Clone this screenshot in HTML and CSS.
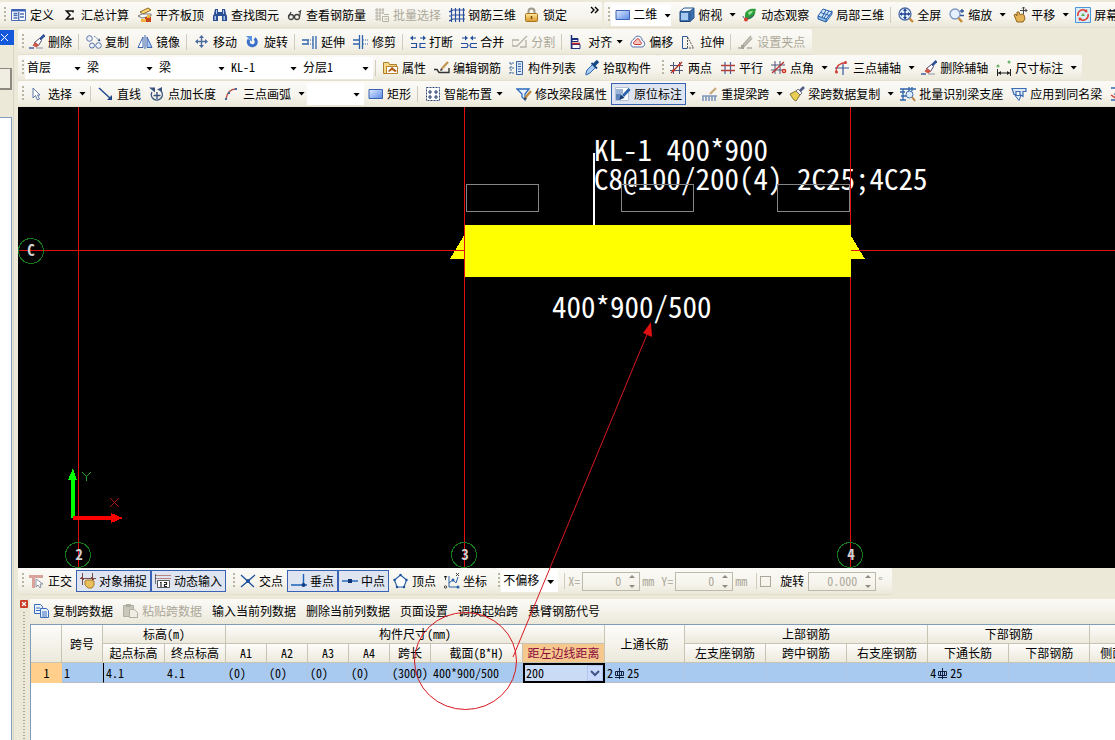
FILE: index.html
```html
<!DOCTYPE html>
<html lang="zh-CN">
<head>
<meta charset="utf-8">
<title>梁原位标注</title>
<link rel="stylesheet" href="styles.css">
</head>
<body>
<svg class="sprite" aria-hidden="true">
<defs>
<linearGradient id="gb" x1="0" y1="0" x2="1" y2="1"><stop offset="0" stop-color="#dfeaff"/><stop offset="1" stop-color="#5b8be6"/></linearGradient>
<linearGradient id="gy" x1="0" y1="0" x2="0" y2="1"><stop offset="0" stop-color="#ffe9a0"/><stop offset="1" stop-color="#d9962a"/></linearGradient>
</defs>
<symbol id="define" viewBox="0 0 16 16"><path fill="#fff" stroke="#4a6fb5" d="M.5 2.500h14v11H.5z"/><path fill="#3a63b8" d="M1 2h13v2.500H1z"/><path stroke="#4a6fb5" stroke-width="1.300" d="M2.500 6.500h4M2.500 8.500h4M2.500 11h4M9 7h4M9 10h4M7.700 5v8"/></symbol>
<symbol id="sum" viewBox="0 0 16 16"><path fill="none" stroke="#111" stroke-width="1.600" d="M11 5.500V4H4.500L8 8l-3.500 4H11v-1.500"/></symbol>
<symbol id="slab" viewBox="0 0 16 16"><path fill="#ffd873" stroke="#8a6420" d="M3 5l8-4 3 2-8 4z"/><path fill="#fff" stroke="#777" d="M1 9l4-2 9 0v2l-9 2z"/><path fill="#c8451c" d="M8 10h6v5H8z"/><path fill="#f5b53d" d="M4 12h5v3H4zM10 8h3v3h-3z"/></symbol>
<symbol id="find" viewBox="0 0 16 16"><path fill="#2c4f94" d="M3 2h3v3h4V2h3l1 5 1 2v5h-5V9H6v5H1V9l1-2z"/><path fill="#a9c5f2" d="M2.500 9h1.500v4H2.500zM11.500 9H13v4h-1.500zM4 3h1v4H4zM11 3h1v4h-1z"/></symbol>
<symbol id="glasses" viewBox="0 0 16 16"><g fill="none" stroke="#444" stroke-width="1.300"><circle cx="4" cy="10" r="2.500"/><circle cx="10" cy="10" r="2.500"/><path d="M6 9.500h1.500M1.500 10L4 5M12.500 10l1-6-2 1"/></g></symbol>
<symbol id="batch" viewBox="0 0 16 16"><g fill="none" stroke="#b5b2a6"><path d="M1 3h9M1 6h9M1 9h6M3 1v13M6 1v13M9 1v6M1 12h6M8.500 9.500h6v5h-6zM10 7.500h5M10.500 12h3"/></g></symbol>
<symbol id="rebar3d" viewBox="0 0 16 16"><g fill="none" stroke="#294f9e" stroke-width="1.200"><path d="M2.500 1v14M6.500 1v14M10.500 1v14M14.500 1v14M0 5l4-2h12M0 9l4-1h12M0 14l4-2h12"/></g></symbol>
<symbol id="lock" viewBox="0 0 16 16"><path fill="none" stroke="#a09a8c" stroke-width="2" d="M4.500 7V4.500a3 3 0 0 1 6 0V7"/><rect x="1.500" y="6.500" width="12" height="8" rx="1" fill="url(#gy)" stroke="#a9751b"/><path stroke="#7b4b07" stroke-width="1.500" d="M7.500 9v3"/></symbol>
<symbol id="rect" viewBox="0 0 16 16"><path fill="url(#gb)" stroke="#3c62b4" d="M1 3.500h13.500v9H1z"/></symbol>
<symbol id="cube" viewBox="0 0 16 16"><path fill="#3e6fae" stroke="#1f4578" d="M1 4.500h10v10H1z"/><path fill="#f4f9ff" stroke="#2b5a91" d="M1 4.500L5 1h10l-4 3.500z"/><path fill="#3e6fae" stroke="#2b5a91" d="M11 4.500L15 1v10l-4 3.500z"/><path fill="#a4c8ee" d="M2 6h7v7H2z"/></symbol>
<symbol id="orbit" viewBox="0 0 16 16"><path fill="#2f9e3c" d="M3 7c1-4 6-6 11-5-1 2 0 5-3 8s-6 3-8 1z"/><path fill="#9be09a" d="M6 6c1-2 3-2 5-2-1 2-2 3-4 4z"/><path fill="none" stroke="#39507c" d="M1 9c0 4 7 3 11-1"/><circle cx="4" cy="12.500" r="2" fill="#d63c29"/></symbol>
<symbol id="local3d" viewBox="0 0 16 16"><path fill="#8fbbe8" stroke="#265ea8" d="M1 9v3l8 3 6-8V4z"/><path fill="#d3e7fa" stroke="#265ea8" d="M1 9l5-7 9 3-6 7z"/><path fill="none" stroke="#265ea8" d="M3.500 5.500l9 3M9 3l-4 7.500M12 4l-5 7M9 12v3"/></symbol>
<symbol id="full" viewBox="0 0 16 16"><circle cx="7" cy="7" r="6" fill="#e6f1ff" stroke="#4a6da8" stroke-width="1.300"/><path stroke="#1e3f91" stroke-width="1.300" d="M7 2.500v9M2.500 7h9"/><path fill="#1e3f91" d="M7 1.500L5 4h4zM7 12.500L5 10h4zM1.500 7L4 5v4zM12.500 7L10 5v4z"/><path stroke="#c58a3a" stroke-width="2.400" d="M11.500 11.500L15 15"/></symbol>
<symbol id="zoom" viewBox="0 0 16 16"><circle cx="6" cy="7" r="5" fill="#e6f1ff" stroke="#7c96c0" stroke-width="1.300"/><path stroke="#c58a3a" stroke-width="2.400" d="M9.500 11L13 15"/><path stroke="#31569c" stroke-width="1.300" d="M11 4h4M13 2v4M11 8.500h4"/></symbol>
<symbol id="pan" viewBox="0 0 16 16"><path fill="#e7b455" stroke="#8d6520" d="M2 8l2-1 1 2 0-4 2 0 1 3 2-1 2 1 1 4-2 3H5z"/><path fill="none" stroke="#444" d="M11.500 0v7M8 3.500h7M10 1.500L11.500 0 13 1.500M13.500 2L15 3.500 13.500 5"/></symbol>
<symbol id="screen" viewBox="0 0 16 16"><path fill="#d7edf9" stroke="#4d95d7" d="M.5.5h15v15H.5z"/><path fill="none" stroke="#df3d31" stroke-width="1.600" d="M3 9a5 5 0 0 1 8-5M13 7a5 5 0 0 1-8 5"/><path fill="#df3d31" d="M12.500 5.500L9 5l3-3zM3.500 10.500l3.500.5-3 3z"/><path fill="#5eac54" d="M6 9l2-3 2 3z"/></symbol>
<symbol id="erase" viewBox="0 0 16 16"><path stroke="#2c4f9a" stroke-width="2.600" d="M15.500 1l-5 5"/><path fill="#fff" stroke="#4b4b74" d="M10.500 4.500l2 2-3 5-4-3z"/><path fill="#c9574a" d="M6 8l4 3-2.500 2.500-4-2z"/><path stroke="#5368a6" stroke-width="1.600" d="M0 14h5"/><path stroke="#8d92ab" d="M7 14h7"/></symbol>
<symbol id="copy" viewBox="0 0 16 16"><g fill="#eef3fb" stroke="#5874ab"><circle cx="3.500" cy="4.500" r="2.800"/><circle cx="6" cy="11.500" r="2.500"/><circle cx="12.500" cy="11.500" r="2.800"/></g><path fill="none" stroke="#6278a5" stroke-dasharray="2 1" d="M8 2l5 4"/><path fill="#3c5997" d="M14.500 7.500l-3-1 2-2z"/></symbol>
<symbol id="mirror" viewBox="0 0 16 16"><path fill="#fff" stroke="#3b64b1" d="M6 3v10.500H1z"/><path fill="#a8c8f4" stroke="#3b64b1" d="M10 3v10.500h5z"/><path stroke="#3b64b1" d="M8 1v14"/></symbol>
<symbol id="move" viewBox="0 0 16 16"><path stroke="#4f6c9f" stroke-width="1.400" d="M7.500 2v11M2 7.500h11"/><path fill="#4f6c9f" d="M7.500 1L5 4h5zM7.500 14L5 11h5zM1 7.500L4 5v5zM14 7.500L11 5v5z"/></symbol>
<symbol id="rotate" viewBox="0 0 16 16"><path fill="none" stroke="#3a70cc" stroke-width="3" d="M9.500 4.500a4 4 0 1 1-5.500 1"/><path fill="#5b93e4" d="M1 2h6v6z"/></symbol>
<symbol id="extend" viewBox="0 0 16 16"><path fill="none" stroke="#3166ae" stroke-width="1.300" d="M0 6h6v4H0M11 2v13M14 2v13"/><path stroke="#3166ae" stroke-dasharray="1 1" d="M6 6h5M6 10h5"/></symbol>
<symbol id="trim" viewBox="0 0 16 16"><path fill="none" stroke="#3166ae" stroke-width="1.300" d="M0 6h6M0 10h6M6.500 1v14M9.500 1v14"/><path stroke="#3166ae" stroke-dasharray="1 1" d="M10 6h6M10 10h6"/></symbol>
<symbol id="break" viewBox="0 0 16 16"><path fill="none" stroke="#234e9f" stroke-width="1.200" d="M1 9.500h5.500v4H1M15.500 9.500H10v4h5.500M2 4h4M10 4h4"/><path fill="#234e9f" d="M0 4l3-2.500v5zM16 4l-3-2.500v5z"/></symbol>
<symbol id="merge" viewBox="0 0 16 16"><path fill="none" stroke="#234e9f" stroke-width="1.200" d="M0 9.500h6l1 2-1 2H0M16 9.500h-6l-1 2 1 2h6M1 4h4M11 4h4"/><path fill="#234e9f" d="M7 4L4 1.500v5zM9 4l3-2.500v5z"/></symbol>
<symbol id="split" viewBox="0 0 16 16"><path fill="none" stroke="#b5b2a6" stroke-width="1.300" d="M0 6h7M0 12h5l10-10M8 13h6V6M0 6v6"/></symbol>
<symbol id="align" viewBox="0 0 16 16"><path stroke="#1d2f7c" stroke-width="1.500" d="M2.500 1v14"/><path fill="#fff" stroke="#1d2f7c" d="M3 4.500h6v3H3zM3 10.500h8v4H3z"/><path stroke="#c62b2b" stroke-width="1.600" d="M3 9.500h8"/><path fill="#1d2f7c" d="M3 4h6v2H3z"/></symbol>
<symbol id="offset" viewBox="0 0 16 16"><path fill="#f3f7ff" stroke="#5574a8" d="M4 5C5 1 12 1 12 6c4 2 3 7 0 7H3C0 13 0 7 4 5z"/><path fill="#f5c4bd" stroke="#ce3a30" d="M5.500 7C6 4 10 4 10 7.500c2 1 2 3 0 3H5c-2 0-2-3 .5-3.500z"/></symbol>
<symbol id="stretch" viewBox="0 0 16 16"><path fill="none" stroke="#2f589d" d="M6.500 2.500h-5v12h5"/><path fill="none" stroke="#555" stroke-dasharray="2 1" d="M6.500 3v11M6.500 3l6 11H7"/></symbol>
<symbol id="grip" viewBox="0 0 16 16"><path fill="none" stroke="#b0ada2" stroke-width="1.700" d="M5 11l8-9M4 12l2 .5L14 4M0 14h3M9 14h5"/><path fill="#a5a297" d="M3 11h3v4H3z"/></symbol>
<symbol id="prop" viewBox="0 0 16 16"><path fill="#f7d98b" stroke="#ad7e2c" d="M.5 2.500h5l1 2h7v9H.500z"/><path fill="#fff" stroke="#b9822c" d="M3.500 6.500h11v7h-11z"/><path fill="#b05d1b" d="M5 11l4-4 5 4-2 1-3-2-3 2z"/></symbol>
<symbol id="editbar" viewBox="0 0 16 16"><path fill="none" stroke="#333" stroke-width="1.400" d="M0 9.500h3l2 3h10V8"/><path stroke="#c29656" stroke-width="2.200" d="M14 2L8 8.500"/><path fill="#333" d="M6 11l1-3 2 2z"/></symbol>
<symbol id="list" viewBox="0 0 16 16"><path fill="#dce9fc" stroke="#38649f" d="M7.500 1.500h6v13h-6z"/><path stroke="#38649f" d="M9 4h3M9 6.500h3M9 9h3M9 11.500h3"/><path stroke="#38649f" stroke-dasharray="2 1" d="M0 3h6M0 8h6M0 13h6M2 3v10"/></symbol>
<symbol id="pick" viewBox="0 0 16 16"><path fill="#a7cbf2" stroke="#2b65af" d="M2 13l1-3 6-6 3 3-6 6-4 2z"/><path stroke="#174884" stroke-width="3.400" d="M10 5l4-4"/><path stroke="#174884" stroke-width="1.800" d="M7.500 3l5.500 5.500"/></symbol>
<symbol id="twopt" viewBox="0 0 16 16"><path stroke="#4c5579" d="M4.500 2v12M10.500 2v12M1 5.500h13M1 10.500h13"/><path stroke="#a73426" stroke-width="1.200" d="M2 13L13 2"/><circle cx="4.500" cy="10.500" r="1.300" fill="#d53426"/><circle cx="10.500" cy="5" r="1.300" fill="#d53426"/></symbol>
<symbol id="parallel" viewBox="0 0 16 16"><path stroke="#3b5fa0" stroke-width="1.200" d="M5 2v12M10.500 2v12"/><path stroke="#b64039" stroke-width="1.300" d="M1 5.500h14M1 10.500h14"/></symbol>
<symbol id="angle" viewBox="0 0 16 16"><path stroke="#4c5579" d="M4 1v13M9 1v13M0 5h14M0 10h12"/><path stroke="#c02c29" stroke-width="1.200" d="M1 13L13 2"/><circle cx="13" cy="11" r="1.600" fill="none" stroke="#d53426" stroke-width="1.500"/></symbol>
<symbol id="arcaxis" viewBox="0 0 16 16"><path stroke="#36589b" stroke-width="1.200" d="M9 3v12M1 8h14"/><path fill="none" stroke="#d13e34" stroke-width="1.300" d="M2 12C2 6 6 3 12 2.500"/><circle cx="2.500" cy="12" r="1.500" fill="#d13e34"/><circle cx="11.500" cy="2.500" r="1.500" fill="#d13e34"/></symbol>
<symbol id="dim" viewBox="0 0 16 16"><path stroke="#222" d="M1.500 9v7M14.500 9v7M2 13h12"/><path fill="#222" d="M2 13l3-2v4zM14 13l-3-2v4z"/><circle cx="2" cy="6" r="1.500" fill="#6db36a"/><circle cx="13" cy="2" r="1.500" fill="#6db36a"/></symbol>
<symbol id="cursor" viewBox="0 0 16 16"><path fill="#fff" stroke="#6079aa" d="M4 2v10l2.500-2.500L8.500 14l2-1-2-4H11z"/></symbol>
<symbol id="line" viewBox="0 0 16 16"><path stroke="#20478c" stroke-width="1.400" d="M1 2l12 11"/><path fill="#20478c" d="M14 14H9l5-5z"/></symbol>
<symbol id="ptlen" viewBox="0 0 16 16"><path fill="none" stroke="#38547f" stroke-width="1.400" d="M3 6a5.500 5.500 0 1 0 9-1M8 6v7M4.500 9.500h7"/><path fill="#38547f" d="M0 1.500h6v5zM8 3.500l5-2.500v5z"/></symbol>
<symbol id="arc" viewBox="0 0 16 16"><path fill="none" stroke="#b84a42" stroke-width="1.300" d="M2 13C3 7 6 3 12 3"/><path fill="#43659f" d="M1 12h2v2H1zM11 2h2v2h-2zM4 6h2v2H4z"/></symbol>
<symbol id="smart" viewBox="0 0 16 16"><path fill="#fff" stroke="#2d4679" stroke-dasharray="2 1" d="M1.500 1.500h13v13h-13z"/><path stroke="#2d4679" stroke-width="1.200" d="M3 6h4M5 4v4M9 6h4M11 4v4M3 11h4M5 9v4M9 11h4M11 9v4"/></symbol>
<symbol id="modseg" viewBox="0 0 16 16"><path fill="#eaf4ff" stroke="#2d6bbd" stroke-width="1.300" d="M1 3h12l-4 5v6l-3-3V8z"/><path stroke="#ba8d42" stroke-width="2.400" d="M15 5l-6 7"/><path fill="#333" d="M8 14l1-3 2 2z"/></symbol>
<symbol id="insitu" viewBox="0 0 16 16"><path fill="#fff" stroke="#b4c2da" d="M.5 1.500h13v13H.5z"/><path fill="#9db4d6" d="M1 3h7v5H1z"/><path fill="#5f84bb" d="M1 8h5v6H1z"/><path stroke="#2a63ab" stroke-width="2.800" d="M14.500 3L8 10"/><path fill="#103875" d="M4.500 13.500l1.500-5 3.500 3.500z"/></symbol>
<symbol id="respan" viewBox="0 0 16 16"><path fill="none" stroke="#7f97bb" stroke-width="1.600" d="M1 15v-5h3v5M7 15v-5h3v5M13 15v-5h2M1 10h13"/><path stroke="#c9a878" stroke-width="2.200" d="M14 2L8 8"/></symbol>
<symbol id="brush" viewBox="0 0 16 16"><path fill="#e8ce53" stroke="#8a7425" d="M1 8l6-3 4 4-4 6c-3-1-4-4-6-7z"/><path fill="#f4f4f7" stroke="#74747c" d="M7 5l2-2 4 4-2 2z"/><path stroke="#4f5e88" stroke-width="2.600" d="M11 5l4-4"/></symbol>
<symbol id="support" viewBox="0 0 16 16"><path fill="none" stroke="#2f66ad" stroke-width="1.300" d="M0 3h16M0 6h5M3 3v11M0 14h6M9 1v4M12 1v4M1 10h5"/><circle cx="9.500" cy="8.500" r="3.500" fill="#dcecff" stroke="#3b68a5"/><path stroke="#b98342" stroke-width="2" d="M12 11l3 4"/></symbol>
<symbol id="apply" viewBox="0 0 16 16"><path fill="#dbe8fa" stroke="#3d6db1" stroke-width="1.200" d="M1 2.500h14v3h-3v5l-3-2V5.500H5v3H3z"/><path fill="#dbe8fa" stroke="#3d6db1" d="M4 9.500h6l-2 5z"/></symbol>
<symbol id="more" viewBox="0 0 16 16"><path fill="#fff" stroke="#2f66ad" stroke-width="1.300" d="M1 2h10L5 8h10M1 14h12"/><path stroke="#d13e34" stroke-width="1.500" d="M1 9l6 4"/></symbol>
<symbol id="ortho" viewBox="0 0 16 16"><path fill="none" stroke="#d9a29b" stroke-width="3" d="M0 3.500h14M4.500 3v12"/><path fill="#fff" stroke="#8b92a5" d="M7 6v8l2-2 2 3 1-1-1-3h3z"/></symbol>
<symbol id="snap" viewBox="0 0 16 16"><path stroke="#714f4f" d="M0 5.500h16M2.500 0v12M12.500 0v8"/><path fill="#eac05e" stroke="#a87a27" d="M5 8l2-1h4l3 1v4l-2 3H8l-3-3z"/><path stroke="#a73426" d="M1 4l3 3M11 4l3 3"/></symbol>
<symbol id="dyn" viewBox="0 0 16 16"><path stroke="#b78683" stroke-width="1.200" d="M0 2.500h16M0 5.500h16"/><path fill="#fff" stroke="#555" d="M2.500 7.500h12v7h-12z"/><path fill="none" stroke="#222" stroke-width="1.200" d="M6 9v5M5 9.500h1M9 9.500h2.500v2H9.500v2H12M0 1v10"/></symbol>
<symbol id="cross" viewBox="0 0 16 16"><path stroke="#1c4f9c" stroke-width="1.300" d="M1 2l13 12M15 2L1 14"/><circle cx="8" cy="8" r="2" fill="#1c4f9c"/></symbol>
<symbol id="perp" viewBox="0 0 16 16"><path stroke="#1c62b8" stroke-width="1.400" d="M0 12h16M12.500 1v11"/><circle cx="12.500" cy="12" r="2" fill="#123f82"/></symbol>
<symbol id="mid" viewBox="0 0 16 16"><path stroke="#1c62b8" stroke-width="1.400" d="M0 8h16"/><path fill="#0e3475" d="M6 6h4v4H6z"/></symbol>
<symbol id="vertex" viewBox="0 0 16 16"><path fill="#fff" stroke="#2a62a9" stroke-width="1.200" d="M7.500 2l6 5-2.500 7H4L1.500 7z"/><g fill="#1c4f9c"><circle cx="7.500" cy="2" r="1.200"/><circle cx="13.500" cy="7" r="1.200"/><circle cx="11" cy="14" r="1.200"/><circle cx="4" cy="14" r="1.200"/><circle cx="1.500" cy="7" r="1.200"/></g></symbol>
<symbol id="coord" viewBox="0 0 16 16"><path fill="none" stroke="#2a62a9" d="M5 3v11h10M5 10l4-3 3 3 2-6"/><path stroke="#444" d="M0 3l1.500 2L3 3M1.500 5v2M12 0l3 3M15 0l-3 3"/><circle cx="1.500" cy="14" r="1.200" fill="none" stroke="#444"/><circle cx="9" cy="7" r="1.500" fill="#2a62a9"/><circle cx="14" cy="14" r="1.500" fill="#2a62a9"/></symbol>
<symbol id="docs" viewBox="0 0 16 16"><path fill="#eaf2ff" stroke="#3b6cba" d="M.5 1.500h6l2 2v7h-8z"/><path fill="#eaf2ff" stroke="#3b6cba" d="M6.500 5.500h6l2 2v7h-8z"/><path stroke="#3b6cba" d="M2 5h4M2 7.500h4M8 9h5M8 11h5M8 13h5"/></symbol>
<symbol id="paste" viewBox="0 0 16 16"><path fill="#c9c6ba" stroke="#b0ada2" d="M.5 2.500h10v11H.5z"/><path fill="#b0ada2" d="M3 1h5v3H3z"/><path fill="#efede4" stroke="#b0ada2" d="M6.500 6.500h5l3 3v5h-8z"/></symbol>
<symbol id="bar" viewBox="0 0 12 12"><path fill="none" stroke="#102040" d="M5.500 0v11M1.500 3.500h8v4h-8zM1 9.500h9M3.500 3v4M7.500 3v4"/></symbol>
</svg>

<header class="row">
<div class="band start">
<button><svg><use href="#define"/></svg>定义</button><button><svg><use href="#sum"/></svg>汇总计算</button><button><svg><use href="#slab"/></svg>平齐板顶</button><button><svg><use href="#find"/></svg>查找图元</button><button><svg><use href="#glasses"/></svg>查看钢筋量</button><button disabled><svg><use href="#batch"/></svg>批量选择</button><button><svg><use href="#rebar3d"/></svg>钢筋三维</button><button><svg><use href="#lock"/></svg>锁定</button><button class="chevrons" aria-label="更多"><svg viewBox="0 0 16 16"><path fill="none" stroke="#000" stroke-width="1.400" d="M8 3l3 3-3 3M12 3l3 3-3 3"/></svg></button>
</div>
<div class="band grow">
<label class="combo view"><svg><use href="#rect"/></svg><select aria-label="视图"><option>二维</option></select></label>
<button><svg><use href="#cube"/></svg>俯视</button><button class="drop" aria-label="俯视选项"></button><button><svg><use href="#orbit"/></svg>动态观察</button><button><svg><use href="#local3d"/></svg>局部三维</button><i class="sep"></i><button><svg><use href="#full"/></svg>全屏</button><button><svg><use href="#zoom"/></svg>缩放</button><button class="drop" aria-label="缩放选项"></button><button><svg><use href="#pan"/></svg>平移</button><button class="drop" aria-label="平移选项"></button><button><svg><use href="#screen"/></svg>屏幕</button>
</div>
</header>

<div class="work">
<aside class="dock"><button class="dockclose" aria-label="关闭"><svg viewBox="0 0 14 15"><path stroke="#fff" d="M1 4l7 7M8 4l-7 7"/></svg></button><div class="docktab"></div><div class="docklist"></div></aside>
<main>
<div class="row">
<div class="band">
<button><svg><use href="#erase"/></svg>删除</button><i class="sep"></i><button><svg><use href="#copy"/></svg>复制</button><button><svg><use href="#mirror"/></svg>镜像</button><i class="sep"></i><button><svg><use href="#move"/></svg>移动</button><button><svg><use href="#rotate"/></svg>旋转</button><i class="sep"></i><button><svg><use href="#extend"/></svg>延伸</button><button><svg><use href="#trim"/></svg>修剪</button><i class="sep"></i><button><svg><use href="#break"/></svg>打断</button><button><svg><use href="#merge"/></svg>合并</button><button disabled><svg><use href="#split"/></svg>分割</button><i class="sep"></i><button><svg><use href="#align"/></svg>对齐</button><button class="drop tight" aria-label="对齐选项"></button><button><svg><use href="#offset"/></svg>偏移</button><button><svg><use href="#stretch"/></svg>拉伸</button><i class="sep"></i><button disabled><svg><use href="#grip"/></svg>设置夹点</button>
</div>
</div>
<div class="row">
<div class="band">
<label class="combo floor"><select aria-label="楼层"><option>首层</option></select></label><label class="combo"><select aria-label="构件类别"><option>梁</option></select></label><label class="combo"><select aria-label="构件类型"><option>梁</option></select></label><label class="combo"><select aria-label="构件"><option>KL-1</option></select></label><label class="combo"><select aria-label="分层"><option>分层1</option></select></label><i class="sep"></i><button><svg><use href="#prop"/></svg>属性</button><button><svg><use href="#editbar"/></svg>编辑钢筋</button><button><svg><use href="#list"/></svg>构件列表</button><button><svg><use href="#pick"/></svg>拾取构件</button>
</div>
<div class="band">
<button><svg><use href="#twopt"/></svg>两点</button><button><svg><use href="#parallel"/></svg>平行</button><button><svg><use href="#angle"/></svg>点角</button><button class="drop" aria-label="点角选项"></button><button><svg><use href="#arcaxis"/></svg>三点辅轴</button><button class="drop" aria-label="辅轴选项"></button><button><svg><use href="#erase"/></svg>删除辅轴</button><button><svg><use href="#dim"/></svg>尺寸标注</button><button class="drop" aria-label="标注选项"></button>
</div>
</div>
<div class="row">
<div class="band grow">
<button><svg><use href="#cursor"/></svg>选择</button><button class="drop" aria-label="选择选项"></button><i class="sep"></i><button><svg><use href="#line"/></svg>直线</button><button><svg><use href="#ptlen"/></svg>点加长度</button><button><svg><use href="#arc"/></svg>三点画弧</button><button class="drop" aria-label="画弧选项"></button><label class="combo short"><select aria-label="画弧参数"><option></option></select></label><button><svg><use href="#rect"/></svg>矩形</button><i class="sep"></i><button><svg><use href="#smart"/></svg>智能布置</button><button class="drop tight" aria-label="布置选项"></button><button class="lead"><svg><use href="#modseg"/></svg>修改梁段属性</button><button class="on"><svg><use href="#insitu"/></svg>原位标注</button><button class="drop" aria-label="原位标注选项"></button><button><svg><use href="#respan"/></svg>重提梁跨</button><button class="drop" aria-label="梁跨选项"></button><button><svg><use href="#brush"/></svg>梁跨数据复制</button><button class="drop" aria-label="复制选项"></button><button><svg><use href="#support"/></svg>批量识别梁支座</button><button><svg><use href="#apply"/></svg>应用到同名梁</button><button aria-label="更多"><svg><use href="#more"/></svg></button>
</div>
</div>

<svg class="canvas" role="img" aria-label="梁平面图">
<g transform="translate(-18 -107)" shape-rendering="crispEdges">
<g class="note"><text x="594" y="161">KL-1 400*900</text><text x="594" y="190">C8@100/200(4) 2C25;4C25</text><text x="552" y="318">400*900/500</text></g>
<path stroke="#fff" stroke-width="2" d="M594 153v72"/>
<path fill="#ff0" d="M465 234v25h-15zM850 234v25h15z"/>
<path stroke="#e01010" d="M18 250.500h447M850 250.500h3000M78.500 107v461"/>
<path fill="#ff0" d="M465 225h386v52H465z"/>
<path stroke="#e01010" d="M464.500 107v461M850.500 107v118M850.500 277v291"/>
<path fill="none" stroke="#858585" d="M466.500 184.500h72v27h-72zM621.500 184.500h72v27h-72zM777.500 184.500h72v27h-72z"/>
<g class="axis"><circle cx="31" cy="251" r="12.500"/><circle cx="78" cy="555" r="12.500"/><circle cx="464" cy="555" r="12.500"/><circle cx="850" cy="555" r="12.500"/></g>
<g class="mark"><text x="31" y="256">C</text><text x="79" y="560">2</text><text x="465" y="560">3</text><text x="851" y="560">4</text></g>
<path fill="#0f0" d="M71 518v-38h-3l5-12 4 12h-2v38z"/>
<path fill="red" d="M73 516h38v-3l12 5-12 5v-3H73z"/>
<path fill="none" stroke="#25a52d" d="M82 472l4.500 4.500 4.500-4.500M86.500 476v5"/>
<path fill="none" stroke="#b01818" d="M110 498l9 9M119 498l-9 9"/>
</g>
</svg>

<div class="row snap">
<div class="band">
<button><svg><use href="#ortho"/></svg>正交</button><button class="on"><svg><use href="#snap"/></svg>对象捕捉</button><button class="on"><svg><use href="#dyn"/></svg>动态输入</button>
</div>
<div class="band">
<button><svg><use href="#cross"/></svg>交点</button><button class="on"><svg><use href="#perp"/></svg>垂点</button><button class="on"><svg><use href="#mid"/></svg>中点</button><button><svg><use href="#vertex"/></svg>顶点</button><button><svg><use href="#coord"/></svg>坐标</button>
</div>
<div class="band">
<label class="combo short"><select aria-label="偏移方式"><option>不偏移</option></select></label><i class="sep"></i>
<label class="field">X=<span class="spin"><input value="0" disabled></span>mm</label>
<label class="field">Y=<span class="spin"><input value="0" disabled></span>mm</label>
<i class="sep"></i>
<label class="field check"><input type="checkbox">旋转</label>
<label class="field"><span class="spin wide"><input value="0.000" aria-label="旋转角度" disabled></span>°</label>
</div>
</div>

<section class="panel">
<div class="panelgrip"><button aria-label="关闭面板"><svg viewBox="0 0 8 8"><path stroke="#fff" stroke-width="1.200" d="M2 2l4 4M6 2L2 6"/></svg></button></div>
<div class="panelbody">
<div class="tools"><button><svg><use href="#docs"/></svg>复制跨数据</button><button disabled><svg><use href="#paste"/></svg>粘贴跨数据</button><button>输入当前列数据</button><button>删除当前列数据</button><button>页面设置</button><button>调换起始跨</button><button>悬臂钢筋代号</button></div>
<div class="grid">
<table>
<colgroup><col class="w31"><col class="w41"><col class="w62"><col class="w61"><col class="w41"><col class="w41"><col class="w41"><col class="w41"><col class="w41"><col class="w92"><col class="w82"><col class="w80"><col class="w81"><col class="w81"><col class="w81"><col class="w81"><col class="w81"><col class="w81"></colgroup>
<thead>
<tr><th rowspan="2"></th><th rowspan="2">跨号</th><th colspan="2">标高(m)</th><th colspan="7">构件尺寸(mm)</th><th rowspan="2">上通长筋</th><th colspan="3">上部钢筋</th><th colspan="2">下部钢筋</th><th></th></tr>
<tr><th>起点标高</th><th>终点标高</th><th>A1</th><th>A2</th><th>A3</th><th>A4</th><th>跨长</th><th>截面(B*H)</th><th class="hot">距左边线距离</th><th>左支座钢筋</th><th>跨中钢筋</th><th>右支座钢筋</th><th>下通长筋</th><th>下部钢筋</th><th>侧面通长筋</th></tr>
</thead>
<tbody>
<tr><th scope="row">1</th><td>1</td><td class="caret">4.1</td><td>4.1</td><td>(0)</td><td>(0)</td><td>(0)</td><td>(0)</td><td>(3000)</td><td>400*900/500</td><td class="edit"><label class="celledit"><select aria-label="距左边线距离"><option>200</option></select><svg viewBox="0 0 16 16"><path fill="#c9dafc" stroke="#b0c4ee" d="M.5.5h15v15H.5z"/><path fill="none" stroke="#3f5587" stroke-width="2" d="M4 6l4 4 4-4"/></svg></label></td><td>2<svg class="bar"><use href="#bar"/></svg>25</td><td></td><td></td><td></td><td>4<svg class="bar"><use href="#bar"/></svg>25</td><td></td><td></td></tr>
</tbody>
</table>
</div>
</div>
<svg class="callout" viewBox="0 0 250 400" aria-hidden="true"><path fill="none" stroke="#d81820" d="M149 353L284 28"/><path fill="#e01010" d="M287 18l1 15-9-4z"/><ellipse cx="101.500" cy="357" rx="51" ry="48.500" fill="none" stroke="#d81820"/></svg>
</section>
</main>
</div>
</body>
</html>
```
FILE: styles.css
```css
* { box-sizing: border-box; }
body {
  margin: 0;
  height: 100vh;
  display: flex;
  flex-direction: column;
  overflow: hidden;
  background: #ece9d8;
  color: #000;
  font: 12px/16px "Noto Sans CJK SC", sans-serif;
  font-feature-settings: "hwid";
}
.sprite { position: absolute; width: 0; height: 0; }
button, select, input { font: inherit; font-feature-settings: inherit; color: inherit; }
svg { flex: none; }

/* Toolbars */
.row { display: flex; height: 26px; flex: none; overflow: hidden; }
header.row { margin: 2px 0 1px; gap: 2px; }
.band {
  display: flex;
  align-items: center;
  flex: none;
  padding-right: 3px;
  border-bottom: 1px solid #e4e0cd;
  border-radius: 2px;
  background: linear-gradient(#fbfaf7, #f6f4ec 60%, #ebe8da);
}
.band::before {
  content: "";
  flex: none;
  width: 2px;
  height: 16px;
  margin: 0 1px 0 4px;
  background: repeating-linear-gradient(#bab6a4 0 2px, transparent 2px 4px);
}
.band.grow { flex: 1 0 auto; }
button {
  display: flex;
  align-items: center;
  flex: none;
  gap: 3px;
  height: 22px;
  padding: 0 4px;
  border: 0;
  background: none;
  white-space: nowrap;
}
button svg, .combo svg { width: 16px; height: 16px; }
button:disabled { color: #aca899; }
button.on { padding: 0 3px; border: 1px solid #3a62b4; background: #dfe5f0; }
button.lead { margin-left: 6px; }
button.drop { width: 12px; height: 22px; padding: 0 3px; }
button.drop::before, .combo::after {
  content: "";
  width: 7px;
  height: 4px;
  flex: none;
  background: #000;
  clip-path: polygon(0 0, 100% 0, 50% 100%);
}
button.tight { width: 10px; padding: 0; }
.chevrons { margin-left: 12px; padding: 0; align-items: flex-start; }
.sep { width: 1px; height: 16px; margin: 0 3px 0 2px; background: #cfccbe; flex: none; }
.combo { position: relative; display: flex; align-items: center; width: 72px; height: 22px; flex: none; background: #fff; }
.combo::after { position: absolute; right: 4px; top: 10px; }
.combo select {
  flex: 1;
  min-width: 0;
  height: 20px;
  padding: 0 14px 2px 2px;
  border: 0;
  outline: 0;
  appearance: none;
  background: none;
}
.combo.short { width: 57px; }
.combo.floor { width: 60px; }
.combo.view { width: 60px; margin-right: 4px; }
.combo.view svg { margin: 0 1px 0 4px; }
.combo.view select { padding-left: 1px; padding-right: 0; }
.combo.view::after { right: 0; }

/* Side dock */
.work { display: flex; flex: 1; min-height: 0; }
.dock { display: flex; flex-direction: column; width: 14px; margin-right: 4px; flex: none; border-right: 1px solid #d8d5c8; }
.dockclose { width: 14px; height: 15px; margin-top: 1px; padding: 0; background: #1458dc; }
.dockclose svg { width: 14px; height: 15px; }
.docktab { height: 22px; margin: 23px 1px 27px 0; border: solid #8c8a80; border-width: 1px 2px 2px 0; background: #f0eee2; }
.docklist { flex: 1; margin-right: 1px; border: solid #7f9db9; border-width: 1px 1px 0 0; background: #fff; }
main { flex: 1; min-width: 0; display: flex; flex-direction: column; }

/* Drawing */
.canvas { display: block; flex: 1; width: 100%; min-height: 0; background: #000; }
.note { fill: #fff; font-size: 29px; font-weight: 400; white-space: pre; }
.mark { fill: #d0d0d0; font-size: 15px; font-weight: 700; text-anchor: middle; }
.axis { fill: none; stroke: #167a1c; }

/* Snap bar */
.snap { height: 27px; }
.snap .band + .band + .band { padding-right: 9px; }
.snap .combo { margin-right: 4px; }
.field { display: flex; align-items: center; gap: 2px; margin-right: 7px; color: #aca899; }
.field:last-child { margin: 0; }
.spin { position: relative; display: block; width: 58px; height: 19px; border: 1px solid #bdbaab; }
.spin.wide { width: 68px; }
.spin input { width: 100%; height: 17px; padding: 0 18px 2px 0; border: 0; background: none; color: #aca899; text-align: right; display: block; }
.spin::before, .spin::after { content: ""; position: absolute; right: 4px; border: 3px solid transparent; }
.spin::before { top: 2px; border-top: 0; border-bottom-color: #8f8c80; }
.spin::after { bottom: 2px; border-bottom: 0; border-top-color: #8f8c80; }
.check { color: #000; gap: 9px; margin-right: 4px; }
.check input { appearance: none; width: 11px; height: 11px; margin: 0; border: 1px solid #aca899; }

/* Span data panel */
.panel { position: relative; display: flex; height: 145px; flex: none; padding-top: 4px; }
.panelgrip { width: 12px; flex: none; display: flex; flex-direction: column; gap: 4px; padding: 1px 0 0 2px; }
.panelgrip button { width: 8px; height: 8px; padding: 0; border-radius: 1px; background: #c93a24; }
.panelgrip button svg { width: 8px; height: 8px; }
.panelgrip::after { content: ""; flex: 1; width: 2px; margin-left: 3px; background: repeating-linear-gradient(#aaa797 0 1px, transparent 1px 3px); }
.panelbody { flex: 1; min-width: 0; display: flex; flex-direction: column; }
.tools { display: flex; align-items: center; height: 25px; flex: none; gap: 2px; padding-bottom: 2px; background: linear-gradient(#fcfbf8, #ebe8da); }
.grid { flex: 1; overflow: hidden; border: solid #7f9db9; border-width: 1px 0 0 1px; background: #fff; }
table { table-layout: fixed; width: 1140px; border-collapse: separate; border-spacing: 0; }
th, td { height: 19px; padding: 0 1px; overflow: hidden; white-space: nowrap; line-height: 18px; }
thead th { border: solid #c8c4b4; border-width: 0 1px 1px 0; background: linear-gradient(#fdfcfa, #ece9dc); font-weight: 400; }
thead th.hot { background: #f6c88e; color: #8a0a3c; }
tbody th { background: #ffcf8b; font-weight: 400; }
tbody td { padding-left: 2px; border-right: 1px solid #b0c6e2; border-bottom: 1px solid #b8bcc4; background: #a8caf0; }
tbody td.caret { border-left: 1px solid #000; }
tbody td.edit { padding: 0; border: 2px solid #000; background: #cadcf5; }
.celledit { display: flex; height: 16px; }
.celledit select { flex: 1; min-width: 0; padding: 0 1px; border: 0; outline: 0; appearance: none; background: none; line-height: 16px; }
.celledit svg { width: 16px; height: 16px; }
.bar { width: 12px; height: 12px; margin: 0 1px; vertical-align: -2px; }
.w31 { width: 31px; } .w41 { width: 41px; } .w61 { width: 61px; } .w62 { width: 62px; }
.w80 { width: 80px; } .w81 { width: 81px; } .w82 { width: 82px; } .w92 { width: 92px; }

/* Markup drawn over the drawing and the table */
.callout { position: absolute; left: 346px; bottom: 36px; width: 250px; height: 400px; overflow: visible; pointer-events: none; }
```
